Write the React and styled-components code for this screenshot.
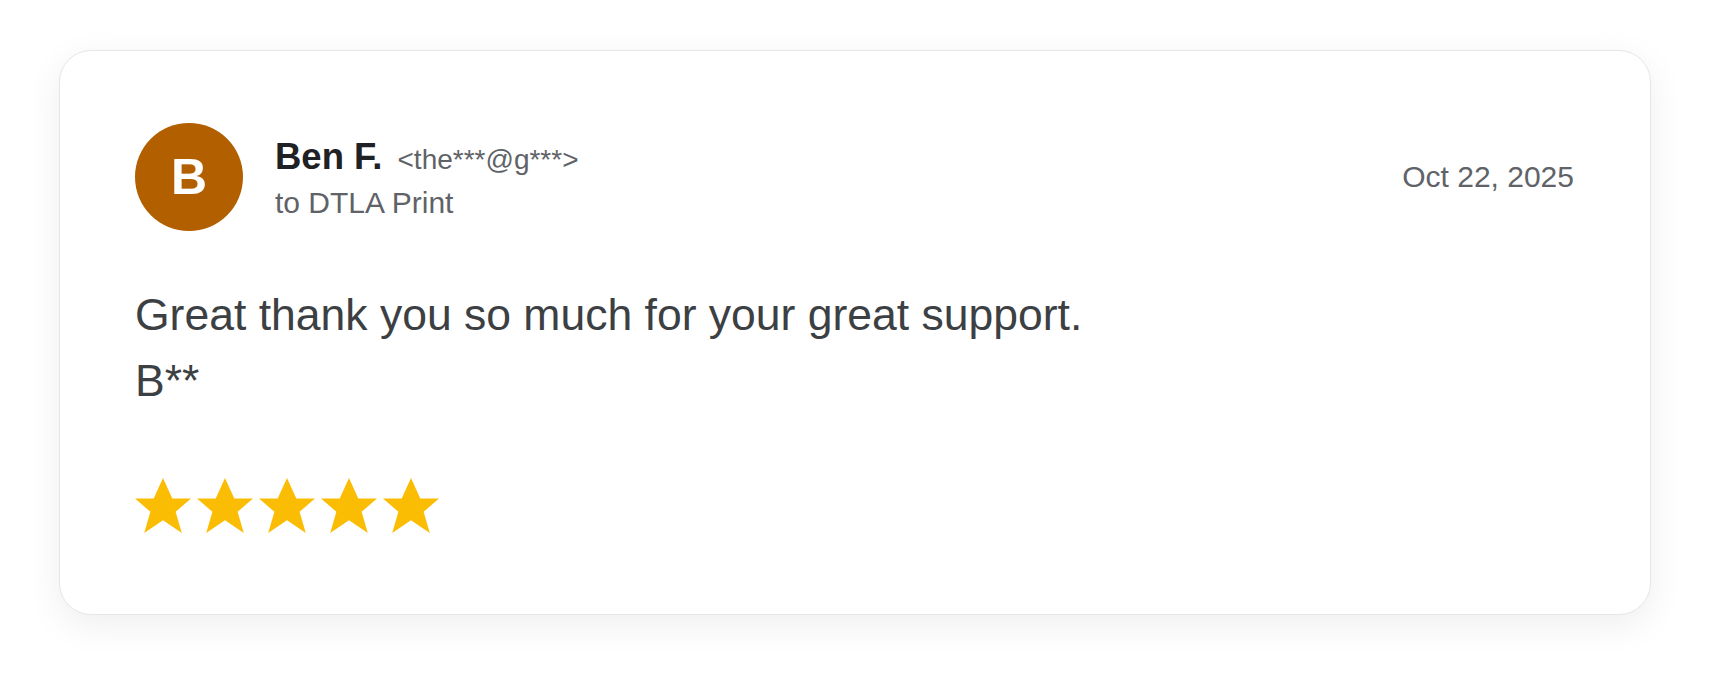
import styled, { createGlobalStyle } from "styled-components";

const GlobalStyle = createGlobalStyle`
  html, body {
    margin: 0;
    background: #ffffff;
  }
  body {
    font-family: "Liberation Sans", Arial, Helvetica, sans-serif;
  }
`;

const Page = styled.div`
  padding: 50px 59px 67px;
`;

const Card = styled.article`
  background: #ffffff;
  border: 1px solid #e4e6ea;
  border-radius: 32px;
  box-shadow: 0 10px 36px rgba(0, 0, 0, 0.07);
  padding: 72px 76px 81px 75px;
`;

const Header = styled.header`
  display: flex;
  align-items: center;
`;

const Avatar = styled.div`
  width: 108px;
  height: 108px;
  border-radius: 50%;
  background: ${(p) => p.$color};
  color: #ffffff;
  display: flex;
  align-items: center;
  justify-content: center;
  font-size: 50px;
  font-weight: 700;
  flex-shrink: 0;
`;

const Sender = styled.div`
  display: flex;
  flex-direction: column;
  margin-left: 32px;
  padding-top: 4px;
  flex: 1;
`;

const NameRow = styled.div`
  display: flex;
  align-items: baseline;
  gap: 15px;
`;

const Name = styled.span`
  font-size: 36.5px;
  font-weight: 700;
  color: #202124;
  line-height: 44px;
`;

const Email = styled.span`
  font-size: 28px;
  color: #5f6368;
`;

const Recipient = styled.span`
  font-size: 30px;
  color: #5f6368;
  line-height: 40px;
  margin-top: 4px;
`;

const DateText = styled.time`
  font-size: 30px;
  color: #5f6368;
`;

const Body = styled.div`
  margin-top: 51px;
  font-size: 44.5px;
  line-height: 66px;
  color: #3c4043;
`;

const Stars = styled.div`
  display: flex;
  gap: 6px;
  margin-top: 64px;
`;

const StarIcon = styled.svg`
  width: 56px;
  height: 55px;
  display: block;
  fill: ${(p) => p.$color};
`;

function Star({ color = "#fbbc04" }) {
  return (
    <StarIcon $color={color} viewBox="0 0 56 55">
      <polygon points="28,0 37.3,20.6 56,20.6 40.6,33.8 46.8,55 28,42.2 9.2,55 15.4,33.8 0,20.6 18.7,20.6" />
    </StarIcon>
  );
}

export default function App() {
  const review = {
    initial: "B",
    name: "Ben F.",
    email: "<the***@g***>",
    to: "to DTLA Print",
    date: "Oct 22, 2025",
    lines: ["Great thank you so much for your great support.", "B**"],
    rating: 5,
  };

  return (
    <Page>
      <GlobalStyle />
      <Card>
        <Header>
          <Avatar $color="#b25f00">{review.initial}</Avatar>
          <Sender>
            <NameRow>
              <Name>{review.name}</Name>
              <Email>{review.email}</Email>
            </NameRow>
            <Recipient>{review.to}</Recipient>
          </Sender>
          <DateText>{review.date}</DateText>
        </Header>
        <Body>
          {review.lines.map((l) => (
            <div key={l}>{l}</div>
          ))}
        </Body>
        <Stars>
          {Array.from({ length: review.rating }).map((_, i) => (
            <Star key={i} />
          ))}
        </Stars>
      </Card>
    </Page>
  );
}
